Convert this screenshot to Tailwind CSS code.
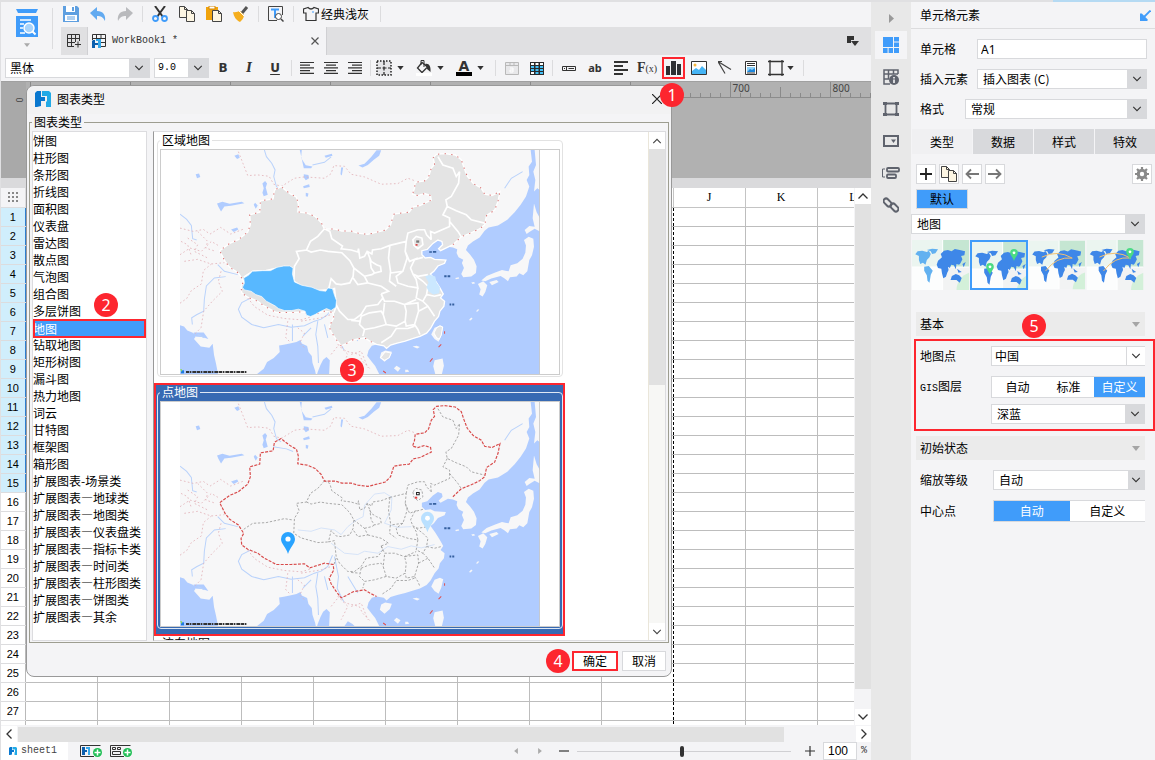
<!DOCTYPE html>
<html lang="zh-CN">
<head>
  <meta charset="UTF-8" />
  <title>WorkBook1</title>
  <script src="https://cdn.jsdelivr.net/npm/@tailwindcss/browser@4"></script>
</head>
<body class="h-screen overflow-hidden flex flex-col bg-[#f4f4f6] text-black text-xs font-['Noto_Sans_CJK_SC',sans-serif]">

  <!-- Shared drawings -->
  <svg class="hidden">
    <symbol id="chev" viewBox="0 0 12 8"><path d="M1.5 1.5 6 6l4.500-4.500" fill="none" stroke="currentColor" stroke-width="1.300" /></symbol>
    <symbol id="tri" viewBox="0 0 8 5"><path d="M0 0h8L4 5z" fill="currentColor" /></symbol>
    <symbol id="logo" viewBox="0 0 16 16">
      <path d="M0 2 2 0h4v6h4v4H6v5l-4 1H0z" fill="#0a78cf" />
      <path d="M7 0h7l2 2v14h-5V11l1-1V5H7z" fill="#22aae6" />
    </symbol>
    <symbol id="pin" viewBox="0 0 14 22"><path d="M7 22C5 15 0 12 0 7a7 7 0 0 1 14 0c0 5-5 8-7 15z" fill="currentColor" /><circle cx="7" cy="7" r="2.600" fill="#fff" /></symbol>
    <symbol id="copy" viewBox="0 0 16 16">
      <path d="M.5.5h5l3 3v8h-8z" fill="#fdf6e3" stroke="#444" /><path d="M5.500.500v3h3" fill="none" stroke="#444" />
      <path d="M7.500 4.500h5l3 3v8h-8z" fill="#fdf6e3" stroke="#444" /><path d="M12.500 4.500v3h3" fill="none" stroke="#444" />
    </symbol>

    <!-- Sea, neighbours, rivers -->
    <symbol id="base" viewBox="87 75 1079 674" preserveAspectRatio="none">
      <path d="M87 75h1079v674H87z" fill="#f7f7f8" />
      <path fill="#b0ccff" d="M1138 75L1142 110 1132 125 1134 150 1126 165 1134 185 1124 215 1108 240 1090 262 1068 285 1040 302 1012 308 1000 318 985 338 965 350 950 362 944 376 955 388 968 405 976 425 974 445 960 456 936 458 930 448 938 430 932 415 936 405 922 398 916 385 918 374 905 368 890 366 868 378 862 372 874 360 872 350 860 346 845 356 828 374 812 378 812 390 822 400 838 398 850 404 884 406 880 416 860 424 848 440 838 448 852 468 866 490 876 508 868 520 880 530 878 545 866 560 862 576 850 590 838 612 826 626 806 636 786 642 762 650 738 656 718 662 706 672 698 664 676 660 662 664 652 678 648 694 660 710 672 725 684 749H1166V75z" />
      <path fill="#b0ccff" d="M87 602L99 606 109 618 127 626 133 638 129 644 149 666 175 670 185 658 189 692 195 718 201 749H87zM318 749L338 733 348 713 368 701 386 683 384 663 398 661 416 657 436 653 448 647 452 657 468 665 472 683 482 695 484 715 492 739 494 749zM500 742L508 722 516 706 526 698 536 708 534 749H498zM580 749L590 735 604 743 610 749z" />
      <!-- Sakhalin, Hokkaido, Honshu, Kyushu, Taiwan, Luzon, Hainan -->
      <g fill="#f7f7f8">
        <path d="M1150 75H1166V196L1158 190 1148 200 1152 165 1146 140 1154 120zM1148 236L1156 262 1166 280V320L1150 312 1134 322 1126 328 1120 316 1134 304 1150 306 1144 280zM1132 336L1146 342 1148 366 1142 392 1134 406 1128 440 1116 452 1104 446 1096 456 1076 458 1070 470 1060 462 1048 454 1020 462 1002 470 990 468 1006 454 1030 444 1052 436 1062 438 1072 440 1078 422 1098 416 1114 402 1122 384 1124 362 1118 346z" />
        <path d="M980 478L996 470 1008 482 1002 502 994 516 984 510 988 494zM1014 472L1036 466 1042 472 1022 482zM866 604L876 608 870 634 862 652 850 644 840 630 850 610zM850 708L874 702 878 724 872 749H852L846 726zM702 678L722 682 716 698 700 712 686 700 690 684z" />
        <path d="M784 666l12-2 10 4-8 4zM728 732l8-8 12 8-8 10zM762 736h8l4 6-12 2zM954 585l6-6 4 4-8 6zM974 560l6-6 4 2-6 6zM960 474l8-2 4 4-8 2zM912 460l10-2 2 4-10 2z" />
      </g>
      <!-- lakes -->
      <g fill="#b0ccff">
        <path d="M622 122L640 116 660 96 676 76 690 76 684 92 668 104 650 120 634 128zM198 236L214 231 236 237 272 231 280 235 240 243 220 245 210 260 202 246zM240 314l18-6 4 6-14 8zM458 148l14 2 2 10-10 6-6-8zM446 75h6l-2 24 14 22 20 4-4 5H458zM134 148l10-2 4 10-10 4zM334 176l8-8 6 8-4 12 6 22-12 4-4-10 4-14zM570 128h6l-4 24-4-4zM456 184l18-6 2 8-18 4zM464 204l8 2-2 10-6-2zM250 92l12-4 4 10-8 4zM312 234l8 8-6 10-6-12zM520 92l22-6 2 6-20 6z" />
        <path d="M128 624h30l14 20-20-6-24-2z" />
      </g>
      <g fill="none" stroke="#b9d2fb" stroke-width="3">
        <path d="M87 268L107 284 121 302 125 342 137 346M340 75L346 95 362 115 372 135 368 155 376 185 390 195M366 210l40 6 20 8M124 600L122 580 138 570 158 560 160 524 166 484 190 460 224 456M300 520L272 534 262 554 272 578 302 600 338 610 382 600 420 608 460 604 490 590 510 584 530 570 544 536M424 600V650M1060 190L1080 160 1114 140M550 540L562 600 558 636 578 676M480 610L456 634M500 590L494 630 500 666 502 716M484 120L520 112 540 96" />
        <path d="M440 460L480 464 510 454 550 460 570 474 590 450 616 430 636 420 640 386 670 352 700 348 722 362 720 400 700 440 740 452 780 450M540 500L580 530 620 534 640 524 680 530 710 510 750 518 780 508 810 514 850 504" stroke-width="2" stroke="#c6daf8" />
        <path d="M200 420l20 20 40 10M160 640l-20-10M520 600l10 40M590 600l30 50" />
      </g>
      <g fill="none" stroke="#e2b2b8" stroke-width="2.500" stroke-dasharray="5 7">
        <path d="M262 80L276 116 290 152 320 150 354 154 368 178 392 184 430 160 460 156 520 160 540 146 548 122 580 124 600 148 640 156 690 178 740 176 770 160 792 168" />
        <path d="M87 310L127 320 157 314 177 328 209 308 239 328 280 312M87 390L117 370 151 380 181 350 201 362M100 410L140 404 180 418 220 414M87 536L107 522 121 498 151 478 157 438 181 418M110 340l30 20-10 20 40 20M140 320l30 30-6 20 30 10M290 520L310 546 350 572 400 582 450 586 476 578M410 590l-6 50 14 14M440 610l20 16-14 30 14 14M540 690L564 660 584 680 624 690 634 710 658 735M560 660l30 30-20 40M600 690l30-10 20 50M450 590l60-10 30-10M90 350l20 10 10 30M210 440L202 470 214 500 184 530 158 560 150 610 130 630" />
      </g>
      <path d="M834 380h8v4h-8zM845 379h10v5h-10zM879 452h7v6h-7zM889 452h8v6h-8zM895 537h5v6h-5zM903 537h6v6h-6z" fill="#345f9f" />
      <path d="M862 668l8-8M836 712l8-10M880 620v8M696 740l8 6" stroke="#e05050" stroke-width="3" />
      <path d="M90 738h9v9h-9z" fill="#1f7be0" /><path d="M87 735h6v8z" fill="#8fdc50" />
      <path d="M105 743h184" stroke="#333" stroke-width="6" stroke-dasharray="9 2 5 3 12 2" />
      <path d="M1165 75v674" stroke="#c8c8c8" stroke-width="3" />
    </symbol>

    <symbol id="outline" viewBox="87 75 1079 674" preserveAspectRatio="none">
      <path d="M390 185L402 195 418 207 436 217 442 239 440 261 468 265 492 275 510 293 520 313 552 313 572 319 600 319 620 325 650 329 674 323 702 316 718 300 728 268 754 264 774 262 786 246 806 242 840 226 838 212 820 206 800 212 784 208 790 190 792 172 820 168 832 156 840 130 850 118 846 98 856 88 880 86 912 90 930 104 938 128 948 154 966 176 990 190 1000 208 1022 212 1046 200 1040 230 1030 256 1006 272 1000 300 985 312 960 324 930 336 905 360 868 378 862 372 874 360 872 350 860 346 845 356 828 374 812 378 812 390 822 400 838 398 850 404 884 406 880 416 860 424 848 440 838 448 852 468 866 490 876 508 868 520 880 530 878 545 866 560 862 576 850 590 838 612 826 626 806 636 786 642 762 650 738 656 718 662 706 672 698 664 676 660 656 650 640 640 606 646 584 658 570 664 555 645 540 622 534 606 548 580 546 564 520 560 476 574 460 562 420 564 376 564 340 545 320 530 290 518 272 505 270 485 278 470 262 445 236 428 222 410 206 378 236 356 262 345 290 322 298 300 296 270 326 262 328 228 366 222 370 196z" />
    </symbol>
    <!-- Land border only, without the coast -->
    <symbol id="border" viewBox="87 75 1079 674" preserveAspectRatio="none">
      <path fill="none" d="M905 360L930 336 960 324 985 312 1000 300 1006 272 1030 256 1040 230 1046 200 1022 212 1000 208 990 190 966 176 948 154 938 128 930 104 912 90 880 86 856 88 846 98 850 118 840 130 832 156 820 168 792 172 790 190 784 208 800 212 820 206 838 212 840 226 806 242 786 246 774 262 754 264 728 268 718 300 702 316 674 323 650 329 620 325 600 319 572 319 552 313 520 313 510 293 492 275 468 265 440 261 442 239 436 217 418 207 402 195 390 185 370 196 366 222 328 228 326 262 296 270 298 300 290 322 262 345 236 356 206 378 222 410 236 428 262 445 278 470 270 485 272 505 290 518 320 530 340 545 376 564 420 564 460 562 476 574 520 560 546 564 548 580 534 606 540 622 555 645 570 664 584 658 606 646 640 640 656 650 676 660" />
    </symbol>
    <symbol id="inner" viewBox="87 75 1079 674" preserveAspectRatio="none">
      <path fill="none" d="M520 312L500 335 478 350 466 376 436 380 444 402 430 425 428 470 450 484 500 498 532 496M278 458L305 440 345 438 400 426 425 430M466 376L480 382 508 376 530 380 572 384 596 408 608 430 606 455 596 475 570 480 555 478 540 462 532 496M520 312L536 320 542 342 574 364 570 372 600 376 620 382 622 372 626 400 640 395 648 380 662 388 664 376 690 372 716 362M648 380L660 410 676 420 688 425 690 440 670 445 660 430 656 400M608 430L640 455 650 475 620 480 606 460M640 455L662 450 670 445M716 362L712 400 718 440 715 470 735 485M650 475L690 485 712 500 690 508M716 362L765 350 762 380 768 400 755 440 718 445M765 350L770 325 800 315 820 315 826 330 840 345M762 380L775 410 800 400M785 345L795 335 812 340 815 360 800 372 788 362zM815 398L790 405 778 430 785 448 800 455 830 450M755 440L735 455 740 475 770 485 800 490 795 465 785 448M795 455L815 470 830 485 826 510 850 515 870 510M800 490L795 520 815 530 826 510M690 508L700 530 730 530 760 540 795 525M700 535L696 570 705 600 735 605 762 590 765 560 760 540 800 535 802 560 790 600 765 605 762 590M802 560L830 545M790 600L800 615 806 630M815 530L830 545 850 575M790 605L770 612 735 612 720 635 690 655M705 600L670 610 640 615 635 635M630 575L655 565 690 560 696 570M630 575L625 600 640 615M532 496L550 492 555 540 565 560 590 585 610 585 630 570 645 545 680 540 695 520 690 508M555 545L548 565M600 588L625 590M860 95L875 120 905 130 915 155 925 140 922 175 900 215 884 225 888 245 915 258 945 270 960 285 1000 295M888 245L875 270 895 280 895 305 850 325 838 320 840 345M895 290L920 320 930 336" />
    </symbol>

    <!-- Small world map for the type switcher -->
    <symbol id="worldbg" viewBox="155 360 173 150" preserveAspectRatio="none">
      <path d="M155 360h93v81h-93z" fill="#ebf5f0" /><path d="M248 360h80v81h-80z" fill="#c5e6d2" />
      <path d="M155 441h93v69h-93z" fill="#fcfdfd" /><path d="M248 441h80v69h-80z" fill="#f2f3f3" />
      <path d="M328 458a56 56 0 0 0-38 52h38z" fill="#d3f0d9" /><path d="M248 360v150M155 441h173" stroke="#fff" stroke-width="3" />
    </symbol>
    <symbol id="americas" viewBox="155 360 173 150" preserveAspectRatio="none">
      <path fill="currentColor" d="M165 403L172 394 186 392 200 396 206 392 212 402 208 412 200 420 196 434 188 428 180 432 176 420 176 408zM200 390L216 386 234 388 226 400 216 402 212 394zM192 440L206 438 218 452 212 464 208 488 202 482 200 466 192 452z" />
    </symbol>
    <symbol id="eurasia" viewBox="155 360 173 150" preserveAspectRatio="none">
      <path fill="currentColor" d="M230 434L234 422 246 412 242 402 252 392 264 390 275 394 285 387 300 390 316 394 314 406 304 408 308 418 302 430 298 434 290 432 288 448 282 436 274 434 270 444 264 440 266 450 262 458 258 470 250 475 246 460 244 446 234 444zM272 480L276 468 288 462 298 466 306 474 300 488 290 480zM292 446L300 452 306 456 296 458zM308 432L318 426 312 442z" />
    </symbol>
  </svg>

  <!-- Window edge -->
  <div class="flex h-0.5 shrink-0">
    <div class="flex-1 bg-[#e0e0e2]"></div>
    <div class="w-[102px] bg-[#b5daf3]"></div>
  </div>

  <div class="flex flex-1 min-h-0">
    <!-- ===== Designer ===== -->
    <main class="flex-1 min-w-0 flex flex-col border-l border-[#e0e0e2]">
      <div class="flex shrink-0">
        <button aria-label="模板" class="w-[51px] flex flex-col items-center pt-[7px]">
          <svg class="w-[22px] h-7" viewBox="0 0 22 28">
            <path d="M0 0h22l-2 4H2zM0 7h22v21H0z" fill="#409cfa" />
            <path d="M4 11h11M4 15h4M4 19h3M4 24h5" stroke="#fff" stroke-width="1.500" /><circle cx="13" cy="19" r="5" fill="#a9d4fb" stroke="#fff" stroke-width="1.500" /><path d="m16.500 22.500 3 3" stroke="#fff" stroke-width="2" />
          </svg>
          <svg class="w-1.5 h-1 mt-1.5 text-[#aaa]"><use href="#tri" /></svg>
        </button>
        <div class="w-px my-1.5 bg-[#dcdcde]"></div>
        <div class="flex-1 min-w-0 pl-2">
          <!-- Main toolbar -->
          <div class="h-[25px] flex items-center gap-[11px] pl-0.5 pb-0.5">
            <button aria-label="保存"><svg class="size-4" viewBox="0 0 16 16"><path d="M0 0h14l2 2v14H0z" fill="#5e9fe0" /><path d="M3 0h9v6H3zM2 9h12v6H2z" fill="#fff" /><path d="M9 1h2v4H9z" fill="#5e9fe0" /><path d="M4 11h8M4 13h8" stroke="#5e9fe0" /></svg></button>
            <button aria-label="撤销"><svg class="size-4" viewBox="0 0 16 16"><path d="M0 7l7-6v4c6 0 9 4 8 10-2-4-4-5-8-5v4z" fill="#62aaf0" /></svg></button>
            <button aria-label="重做"><svg class="size-4" viewBox="0 0 16 16"><path d="M16 7 9 1v4C3 5 0 9 1 15c2-4 4-5 8-5v4z" fill="#b9babd" /></svg></button>
            <div class="w-px h-4 -mx-0.5 bg-[#dcdcde]"></div>
            <button aria-label="剪切"><svg class="size-4" viewBox="0 0 16 16"><path d="m3 0 8 11M13 0 5 11" stroke="#333" stroke-width="2" /><circle cx="3.500" cy="12.500" r="2.500" fill="none" stroke="#409cfa" stroke-width="1.800" /><circle cx="12.500" cy="12.500" r="2.500" fill="none" stroke="#409cfa" stroke-width="1.800" /></svg></button>
            <button aria-label="复制"><svg class="size-4"><use href="#copy" /></svg></button>
            <button aria-label="粘贴"><svg class="size-4" viewBox="0 0 16 16"><path d="M0 1h12v13H0z" fill="#f0a30c" /><path d="M3 0h6v3H3z" fill="#fff" stroke="#d48806" /><path d="M6.500 4.500h6l3 3v8h-9z" fill="#fdf6e3" stroke="#444" /><path d="M12.500 4.500v3h3" fill="none" stroke="#444" /></svg></button>
            <button aria-label="格式刷"><svg class="size-4" viewBox="0 0 16 16"><path d="m14 1-5 6" stroke="#555" stroke-width="3" /><path d="M0 6c3 1 5-1 7-1l4 4c0 3-2 5-4 7-4-2-6-5-7-10z" fill="#f5ae1e" /><path d="m6 5 5 5" stroke="#fff" stroke-width="1" /></svg></button>
            <div class="w-px h-4 -mx-0.5 bg-[#dcdcde]"></div>
            <button aria-label="查找"><svg class="size-4" viewBox="0 0 16 16"><path d="M9 14.500H.500V.500h14V9" fill="none" stroke="#444" /><path d="M3 3.500h8M7 4v8" stroke="#409cfa" stroke-width="2" /><circle cx="10.500" cy="10.500" r="3" fill="#fff" stroke="#444" /><path d="m13 13 2.500 2.500" stroke="#444" stroke-width="1.500" /></svg></button>
            <div class="w-px h-4 -mx-0.5 bg-[#dcdcde]"></div>
            <button class="flex items-center gap-0.5"><svg class="size-4" viewBox="0 0 16 16"><path d="M5 1.500.500 3v4H3v7.500h10V7h2.500V3L11 1.500Q8 4.500 5 1.500z" fill="none" stroke="#333" stroke-width="1.200" /><path d="M9 6h2" stroke="#409cfa" /></svg>经典浅灰</button>
            <div class="w-px h-4 bg-[#dcdcde]"></div>
          </div>
          <!-- Workbook tabs -->
          <div class="h-7 flex items-center bg-[#e0e0e2]">
            <button aria-label="新建" class="w-[26px] h-7 flex items-center justify-center"><svg class="size-3.5" viewBox="0 0 14 14"><path d="M7 12.500H.500V.500h12V7M.500 4.500h12M.500 8.500H8M4.500.500v12M8.500.500V8M8 10.500h6M11 7.500v6" fill="none" stroke="#333" /></svg></button>
            <div class="w-60 h-7 flex items-center bg-[#f4f4f6] border-x border-[#d0d0d3] pl-1 pr-[7px]">
              <svg class="size-3.5" viewBox="0 0 14 14"><path d="M.500 6V.500h13v12H9M.500 4.500h13M9 8.500h4.500M4.500.500v4M9 .500v4" fill="none" stroke="#333" /><path d="M0 7l1-1h2v8H0zM3 9h3v2H3z" fill="#0b5fae" /><path d="M4 5h5v9H6V7H4z" fill="#35a8ea" /></svg>
              <span class="ml-1.5 flex-1 text-[10px] font-['Liberation_Mono',monospace] text-[#333]">WorkBook1 *</span>
              <button aria-label="关闭"><svg class="size-2" viewBox="0 0 8 8"><path d="m.500.500 7 7m0-7-7 7" stroke="#555" stroke-width="1.200" /></svg></button>
            </div>
            <button aria-label="窗口" class="ml-auto mr-3"><svg class="w-3 h-2.5" viewBox="0 0 12 10"><path d="M0 0h7v4H4v3H0z" fill="#333" /><path d="M4 5h8L8 10z" fill="#333" /></svg></button>
          </div>
        </div>
      </div>

      <!-- Format toolbar -->
      <div class="h-[26px] shrink-0 flex items-center pl-1 text-[#333]">
        <div class="relative w-[145px] h-5 flex bg-white border border-[#d8d9dc]">
          <select aria-label="字体" class="appearance-none w-full pl-1 outline-none text-black"><option>黑体</option></select>
          <span class="absolute right-0 w-5 h-full bg-[#d8d9dc] flex items-center justify-center pointer-events-none"><svg class="w-2.5 h-2"><use href="#chev" /></svg></span>
        </div>
        <div class="relative w-[55px] h-5 flex bg-white border border-[#d8d9dc] ml-1">
          <select aria-label="字号" class="appearance-none w-full pl-[3px] outline-none text-[10px] text-black font-['Liberation_Mono',monospace]"><option>9.0</option></select>
          <span class="absolute right-0 w-5 h-full bg-[#d8d9dc] flex items-center justify-center pointer-events-none"><svg class="w-2.5 h-2"><use href="#chev" /></svg></span>
        </div>
        <button class="w-[26px] ml-px font-['DejaVu_Sans',sans-serif] font-bold">B</button>
        <button class="w-[26px] font-['DejaVu_Serif',serif] font-bold italic">I</button>
        <button class="w-[26px] font-['DejaVu_Sans',sans-serif] font-bold underline underline-offset-2">U</button>
        <div class="w-px h-4 mx-[3px] bg-[#dcdcde]"></div>
        <button aria-label="左对齐" class="w-6 flex justify-center"><svg class="w-3.5 h-3" viewBox="0 0 14 12"><path d="M0 .500h14M0 3.200h10M0 5.900h14M0 8.600h10M0 11.300h14" stroke="#333" stroke-width="1.200" /></svg></button>
        <button aria-label="居中" class="w-6 flex justify-center"><svg class="w-3.5 h-3" viewBox="0 0 14 12"><path d="M0 .500h14M2 3.200h10M0 5.900h14M2 8.600h10M0 11.300h14" stroke="#333" stroke-width="1.200" /></svg></button>
        <button aria-label="右对齐" class="w-6 flex justify-center"><svg class="w-3.5 h-3" viewBox="0 0 14 12"><path d="M0 .500h14M4 3.200h10M0 5.900h14M4 8.600h10M0 11.300h14" stroke="#333" stroke-width="1.200" /></svg></button>
        <div class="w-px h-4 mx-[3px] bg-[#dcdcde]"></div>
        <button aria-label="边框" class="w-10 flex items-center gap-[5px] pl-0.5"><svg class="size-4" viewBox="0 0 16 16"><path d="M1 1h14v14H1z" fill="#e6e6e8" stroke="#222" stroke-width="1.500" stroke-dasharray="1.500 1.500" /><path d="M1 8h14M8 1v14" stroke="#222" stroke-width="1.200" stroke-dasharray="4 1.500" /></svg><svg class="w-[7px] h-1"><use href="#tri" /></svg></button>
        <button aria-label="填充" class="w-10 flex items-center gap-[5px] pl-0.5"><svg class="size-4" viewBox="0 0 16 16"><path d="M6 2.500 1.500 8 6 12.500 11.500 7z" fill="#f4f4f6" stroke="#333" stroke-width="1.300" /><path d="M5 5V.500h3V7" fill="none" stroke="#333" /><path d="M9 4c4-1 6 2 5.500 8L11 9V7z" fill="#333" /><path d="M0 13h16v3H0z" fill="#fff" /></svg><svg class="w-[7px] h-1"><use href="#tri" /></svg></button>
        <button aria-label="文字颜色" class="w-[38px] flex items-center gap-[5px] pl-0.5"><span class="w-4 h-4 border-b-4 border-black text-center leading-3 text-sm font-bold font-['DejaVu_Sans',sans-serif]">A</span><svg class="w-[7px] h-1"><use href="#tri" /></svg></button>
        <div class="w-px h-4 mx-[3px] bg-[#dcdcde]"></div>
        <button aria-label="合并" class="w-[25px] flex justify-center"><svg class="w-3.5 h-[13px]" viewBox="0 0 14 13"><path d="M.500.500h13v12H.500zM.500 3.500h13M5 .500v3M9 .500v3" fill="#e8e8ea" stroke="#b9b9b9" /><path d="M5 6h3v4H5V8h3" fill="none" stroke="#fff" /></svg></button>
        <button aria-label="表格" class="w-[25px] flex justify-center"><svg class="w-3.5 h-[13px]" viewBox="0 0 14 13"><path d="M0 0h14v13H0z" fill="#2a2a2a" /><path d="M1 1h3v2H1zM5.500 1h3v2h-3zM10 1h3v2h-3z" fill="#fff" /><path d="M1 4h3v2H1zM5.500 4h3v2h-3zM10 4h3v2h-3zM1 7h3v2H1zM5.500 7h3v2h-3zM10 7h3v2h-3zM5.500 10h3v2h-3zM10 10h3v2h-3z" fill="#45c0f5" /><path d="M1 10h3v2H1z" fill="#fff" /></svg></button>
        <div class="w-px h-4 mx-[3px] bg-[#dcdcde]"></div>
        <button aria-label="控件" class="w-[26px] flex justify-center"><svg class="w-3.5 h-[5px]" viewBox="0 0 14 5"><path d="M.500.500h13v4H.500zM4.500.500v4M6.500 2.500H12M2 2.500h1" fill="none" stroke="#333" /></svg></button>
        <button class="w-[26px] text-[11px] font-bold font-['Noto_Sans',sans-serif]">ab</button>
        <button aria-label="富文本" class="w-[26px] flex justify-center"><svg class="w-3.5 h-3.5" viewBox="0 0 14 14"><path d="M0 1h14M0 5h9M0 9h14M0 13h9" stroke="#333" stroke-width="2" /></svg></button>
        <button class="w-[26px] text-sm leading-4 font-['Liberation_Serif',serif]"><span class="font-bold">F</span><span class="text-[10px]">(x)</span></button>
        <div class="relative w-[26px] flex justify-center">
          <button aria-label="插入图表" class="w-[23px] h-[22px] border-2 border-[#fd262f] flex items-center justify-center"><svg class="w-[15px] h-3.5" viewBox="0 0 15 14"><path d="M0 5h4v9H0zM5 0h5v14H5zM11 3h4v11h-4z" fill="#2e3033" /></svg></button>
          <span class="absolute z-20 left-0 top-[26px] size-6 rounded-full bg-[#fd262f] text-white text-base leading-6 text-center font-['Noto_Sans',sans-serif]">1</span>
        </div>
        <button aria-label="图片" class="w-[26px] flex justify-center"><svg class="w-4 h-3.5" viewBox="0 0 16 14"><path d="M.500.500h15v13H.500z" fill="#fff" stroke="#333" /><circle cx="4" cy="4" r="1.500" fill="#f5b63d" /><path d="m1 13V10l4-3 3 2 3-4 4 4v4z" fill="#45b4f5" /></svg></button>
        <button aria-label="斜线" class="w-[26px] flex justify-center"><svg class="w-3.5 h-3.5" viewBox="0 0 14 14"><path d="m0 .500 13 8M0 .500l7 12M0 .500h4" fill="none" stroke="#444" stroke-width="1.200" /></svg></button>
        <button aria-label="子报表" class="w-[26px] flex justify-center"><svg class="w-3 h-3.5" viewBox="0 0 12 14"><path d="M.500.500h11v13H.500z" fill="#fff" stroke="#333" /><path d="M2 2.500h8M2 4.500h8M2 12h8" stroke="#333" /><path d="M2 6h8v5H2z" fill="#8fd0f8" /><path d="m2 11 3-3 2 1 3-2v4z" fill="#1c86dc" /></svg></button>
        <button aria-label="悬浮元素" class="w-9 flex items-center gap-[3px] pl-1"><svg class="size-4" viewBox="0 0 16 16"><path d="M2 0v16M14 0v16M0 1.500h16M0 14.500h16" stroke="#333" stroke-width="1.300" /></svg><svg class="w-[7px] h-1"><use href="#tri" /></svg></button>
        <div class="w-px h-4 ml-[3px] bg-[#dcdcde]"></div>
      </div>

      <!-- Sheet -->
      <div class="relative flex-1 min-h-0">
        <div class="h-full flex flex-col overflow-hidden">
          <div class="h-[97px] shrink-0 bg-[#b1b1b1] flex border-t border-[#a0a0a0]">
            <div class="w-[25px] bg-[#a9a9a9] pt-3"><span class="block rotate-90 w-3 ml-3 text-center text-[9px] leading-3 text-[#444]">0</span></div>
            <svg class="flex-1 h-4 border-b border-[#8c8c8c]" id="ruler"></svg>
          </div>
          <div class="h-2.5 shrink-0 bg-[#dadadc]"></div>
          <div class="flex flex-1 min-h-0">
            <div class="flex-1 min-w-0 overflow-hidden bg-white">
              <table class="table-fixed border-collapse w-[888px] text-[11px] leading-4 font-['Liberation_Sans',sans-serif]" id="grid"></table>
            </div>
            <div class="w-4 ml-px flex flex-col bg-[#f4f4f6]">
              <button aria-label="上" class="h-4 bg-white flex items-center justify-center"><svg class="w-3 h-2 rotate-180 text-[#333]"><use href="#chev" /></svg></button>
              <div class="h-[485px] bg-[#e1e1e1]"></div>
              <button aria-label="下" class="mt-auto h-4 bg-white flex items-center justify-center"><svg class="w-3 h-2 text-[#333]"><use href="#chev" /></svg></button>
            </div>
          </div>
        </div>

        <!-- ===== Chart type dialog ===== -->
        <div role="dialog" aria-labelledby="dlgTitle" class="absolute z-10 left-[25px] top-1 w-[646px] h-[592px] flex flex-col bg-[#f4f4f6] border border-[#999] rounded-lg">
          <div class="h-[28px] shrink-0 flex items-center pl-2 pr-[9px] pb-0.5 rounded-t-lg bg-[#f2f2f3]">
            <svg class="size-4"><use href="#logo" /></svg>
            <h2 id="dlgTitle" class="ml-1.5 flex-1">图表类型</h2>
            <button aria-label="关闭"><svg class="size-2.5" viewBox="0 0 10 10"><path d="m0 0 10 10M10 0 0 10" stroke="#222" stroke-width="1.200" /></svg></button>
          </div>
          <fieldset class="flex-1 min-h-0 mx-0.5 px-0.5 pt-px pb-px border border-[#9d9d90] flex gap-1.5">
            <legend class="px-0.5 leading-4">图表类型</legend>
            <div class="relative w-[115px] h-full shrink-0">
              <ul class="h-full bg-white border border-[#dcdcdf]" id="types"></ul>
              <span class="absolute left-[62px] top-[162px] size-6 rounded-full bg-[#fd262f] text-white text-base leading-6 text-center font-['Noto_Sans',sans-serif]">2</span>
            </div>
            <div class="relative flex-1 h-full min-w-0 flex bg-white border border-[#dcdcdf] border-l-[#999]">
              <div class="flex-1 min-w-0 h-full overflow-hidden">
                <fieldset class="w-[406px] ml-[3px] mt-px px-0.5 pt-0.5 pb-px border border-[#e2e2e2] rounded">
                  <legend class="px-0.5 h-3.5 leading-[14px]">区域地图</legend>
                  <div class="h-[226px] border border-[#ccc] flex justify-center">
                    <svg class="w-[360px] h-[224px]" viewBox="0 0 360 224">
                      <use href="#base" width="360" height="224" />
                      <use href="#outline" width="360" height="224" fill="#e4e4e4" stroke="#fff" stroke-width="4" />
                      <use href="#border" width="360" height="224" stroke="#d87070" stroke-width="3" stroke-dasharray="4 16" />
                      <use href="#inner" width="360" height="224" stroke="#fff" stroke-width="5" />
                      <svg width="360" height="224" viewBox="87 75 1079 674" preserveAspectRatio="none">
                        <path d="M278 460L292 452 304 440 334 438 358 438 378 428 398 424 416 424 426 430 424 448 430 472 452 482 482 488 506 498 524 500 530 490 544 492 550 512 556 528 554 548 540 558 526 552 506 562 492 570 478 576 466 572 462 560 442 554 422 558 400 558 382 552 372 544 346 530 332 516 314 510 300 500 280 496 274 488 280 476z" fill="#58b8ff" stroke="#fff" stroke-width="2" />
                        <path d="M822 456L836 450 852 456 856 474 866 488 864 506 846 510 832 500 826 488 832 474z" fill="#cbe8ff" />
                        <path d="M866 604l8 4-4 24-6 12-8-4-8-14 8-16zM702 682l18 4-6 14-14 8-12-8z" fill="#e4e4e4" stroke="#fff" stroke-width="3" />
                        <path d="M795 347h9v7h-9z" fill="#777" /><path d="M793 358h6v5h-6z" fill="#e04040" />
                      </svg>
                    </svg>
                  </div>
                </fieldset>
                <div class="w-[411px] mt-1.5 pl-px pb-[5px] border-2 border-[#fd262f] bg-[#376ab3]">
                  <fieldset class="px-0.5 pt-0.5 pb-px border border-[#dfe8f5] rounded">
                    <legend class="px-0.5 h-3.5 leading-[14px] text-white">点地图</legend>
                    <div class="h-[226px] bg-white border border-[#ccc] flex justify-center">
                      <svg class="w-[360px] h-[224px]" viewBox="0 0 360 224">
                        <use href="#base" width="360" height="224" />
                        <use href="#inner" width="360" height="224" stroke="#999" stroke-width="2.500" stroke-dasharray="7 5" />
                        <use href="#border" width="360" height="224" stroke="#d84a4a" stroke-width="3.500" stroke-dasharray="9 4" />
                        <svg width="360" height="224" viewBox="87 75 1079 674" preserveAspectRatio="none">
                          <path d="M796 347h8v7h-8z" fill="#fff" stroke="#222" stroke-width="3" /><path d="M791 360h7v6h-7z" fill="#e84040" />
                        </svg>
                        <use href="#pin" x="101" y="130" width="14" height="22" class="text-[#29a3ff]" />
                        <use href="#pin" x="241" y="109" width="13" height="22" class="text-[#b9e0ff]" />
                      </svg>
                    </div>
                  </fieldset>
                </div>
                <p class="ml-2 leading-[14px]">流向地图</p>
              </div>
              <div class="w-[17px] shrink-0 flex flex-col bg-[#f7f7f5] border-l border-[#eae6da]">
                <button aria-label="上" class="h-[17px] bg-white flex items-center justify-center"><svg class="w-2.5 h-2 rotate-180 text-[#444]"><use href="#chev" stroke-width="2" /></svg></button>
                <div class="h-[236px] bg-[#e1e1e1]"></div>
                <button aria-label="下" class="mt-auto h-[17px] bg-white flex items-center justify-center"><svg class="w-2.5 h-2 text-[#444]"><use href="#chev" /></svg></button>
              </div>
              <span class="absolute left-[186px] top-[226px] size-6 rounded-full bg-[#fd262f] text-white text-base leading-6 text-center font-['Noto_Sans',sans-serif]">3</span>
            </div>
          </fieldset>
          <div class="h-[33px] shrink-0 flex items-center justify-end gap-1 pr-[5px] pb-px pt-1">
            <div class="relative">
              <button class="block w-[46px] h-5 leading-4 bg-white border-2 border-[#fd262f]">确定</button>
              <span class="absolute right-[48px] -top-0.5 size-6 rounded-full bg-[#fd262f] text-white text-base leading-6 text-center font-['Noto_Sans',sans-serif]">4</span>
            </div>
            <button class="w-11 h-5 leading-4 bg-white border border-[#d8d9dc]">取消</button>
          </div>
        </div>
      </div>

      <!-- Horizontal scrollbar -->
      <div class="h-4 shrink-0 flex items-center mt-px">
        <button aria-label="左" class="w-4 h-4 bg-white flex items-center justify-center"><svg class="w-3 h-2 rotate-90 text-[#333]"><use href="#chev" /></svg></button>
        <div class="w-[766px] h-[15px] ml-px bg-[#e1e1e1]"></div>
        <button aria-label="右" class="ml-auto w-[15px] h-4 bg-white flex items-center justify-center"><svg class="w-3 h-2 -rotate-90 text-[#333]"><use href="#chev" /></svg></button>
      </div>
      <!-- Status bar -->
      <div class="h-[18px] shrink-0 flex items-center">
        <button class="w-[67px] h-full bg-white flex items-center gap-1 pl-2 text-[10px] text-[#444] font-['Liberation_Mono',monospace]"><svg class="size-2"><use href="#logo" /></svg>sheet1</button>
        <button aria-label="添加sheet" class="ml-3"><svg class="w-[22px] h-3" viewBox="0 0 22 12"><path d="M14 11.500H.500V.500h20" fill="none" stroke="#333" /><path d="M2 2h3v3h2v2H5v3H2z" fill="#0b5fae" /><path d="M6 2h4v8H8V4H6z" fill="#35a8ea" /><circle cx="17.500" cy="7.500" r="4.500" fill="#1fbf55" /><path d="M14.500 7.500h6M17.500 4.500v6" stroke="#fff" stroke-width="1.500" /></svg></button>
        <button aria-label="添加决策报表" class="ml-2"><svg class="w-[22px] h-3" viewBox="0 0 22 12"><path d="M14 11.500H.500V.500h20" fill="none" stroke="#333" /><path d="M2.500 2.500h3v2h-3zM7.500 2.500h3v2h-3zM2.500 6.500h8v3h-8z" fill="none" stroke="#333" /><circle cx="17.500" cy="7.500" r="4.500" fill="#1fbf55" /><path d="M14.500 7.500h6M17.500 4.500v6" stroke="#fff" stroke-width="1.500" /></svg></button>
        <div class="ml-auto flex items-center text-[#333]">
          <svg class="w-1.5 h-1 rotate-90 text-[#aaa]"><use href="#tri" /></svg>
          <svg class="w-1.5 h-1 -rotate-90 ml-[18px] text-[#aaa]"><use href="#tri" /></svg>
          <button aria-label="缩小" class="ml-4"><svg class="size-2.5" viewBox="0 0 10 10"><path d="M0 5h10" stroke="#333" stroke-width="1.200" /></svg></button>
          <input type="range" aria-label="缩放" value="49" class="appearance-none w-[214px] h-px mx-2 bg-[#d0d0d3] [&::-webkit-slider-thumb]:appearance-none [&::-webkit-slider-thumb]:w-1 [&::-webkit-slider-thumb]:h-[11px] [&::-webkit-slider-thumb]:rounded-sm [&::-webkit-slider-thumb]:bg-[#333]" />
          <button aria-label="放大" class="ml-1.5"><svg class="size-2.5" viewBox="0 0 10 10"><path d="M0 5h10M5 0v10" stroke="#333" stroke-width="1.200" /></svg></button>
          <input aria-label="缩放比例" value="100" class="w-[34px] h-[18px] ml-2 pl-1 bg-white border border-[#d8d9dc] text-black font-['Liberation_Sans',sans-serif]" />
          <span class="w-[14px] text-center text-[10px] font-['Liberation_Mono',monospace]">%</span>
        </div>
      </div>
    </main>

    <!-- ===== Side icons ===== -->
    <nav class="w-10 shrink-0 flex flex-col items-center gap-1 bg-[#e8e8e8] text-[#5f636d]">
      <button aria-label="折叠" class="h-[25px] pt-2"><svg class="w-[5px] h-[9px]" viewBox="0 0 5 9"><path d="M0 0v9l5-4.500z" fill="#999" /></svg></button>
      <button aria-label="单元格元素" class="w-8 h-7 flex items-center justify-center bg-[#f4f4f6]"><svg class="size-4" viewBox="0 0 16 16" fill="#409cfa"><path d="M0 0h10v10H0zM11 0h5v4.500h-5zM11 5.500h5V10h-5zM0 11h4.600v5H0zM5.600 11H10v5H5.600zM11 11h5v5h-5z" /></svg></button>
      <button aria-label="单元格属性" class="w-8 h-7 flex items-center justify-center"><svg class="size-4" viewBox="0 0 16 16"><path d="M7 15H1V1h14v4M1 5h14M1 10h5M5.500 1v9M10.500 1v4" fill="none" stroke="currentColor" stroke-width="1.500" /><circle cx="11" cy="11" r="5" fill="currentColor" /><path d="M11 8v1.500M11 10.500v3.500" stroke="#fff" stroke-width="1.500" /></svg></button>
      <button aria-label="悬浮元素" class="w-8 h-7 flex items-center justify-center"><svg class="size-4" viewBox="0 0 16 16"><path d="M2.500 2.500h11v11h-11z" fill="none" stroke="currentColor" stroke-width="1.800" /><path d="M0 1h4v3H0zM12 1h4v3h-4zM0 12h4v3H0zM12 12h4v3h-4z" fill="currentColor" /></svg></button>
      <button aria-label="控件设置" class="w-8 h-7 flex items-center justify-center"><svg class="size-4" viewBox="0 0 16 16"><path d="M1 3h14v10H1z" fill="none" stroke="currentColor" stroke-width="2" /><path d="M8 6.500h5L10.500 10z" fill="currentColor" /></svg></button>
      <button aria-label="条件属性" class="w-8 h-7 flex items-center justify-center"><svg class="w-[18px] h-3" viewBox="0 0 18 12"><path d="M3 2H.500v8H3" fill="none" stroke="currentColor" /><rect x="5" y="1" width="12" height="3.500" rx="1" fill="none" stroke="currentColor" stroke-width="1.800" /><rect x="5" y="7.500" width="9" height="3.500" rx="1" fill="none" stroke="currentColor" stroke-width="1.800" /></svg></button>
      <button aria-label="超级链接" class="w-8 h-7 flex items-center justify-center"><svg class="size-4" viewBox="0 0 16 16" fill="none" stroke="currentColor" stroke-width="2"><rect x="0" y="3" width="9" height="5" rx="2.500" transform="rotate(45 4.500 5.500)" /><rect x="7" y="8" width="9" height="5" rx="2.500" transform="rotate(45 11.500 10.500)" /></svg></button>
    </nav>

    <!-- ===== Property panel ===== -->
    <aside class="w-[244px] shrink-0">
      <div class="h-[27px] flex items-center justify-between pl-[9px] pr-1 border-b border-[#dcdcde]">
        <h2>单元格元素</h2>
        <button aria-label="弹出"><svg class="size-[11px]" viewBox="0 0 11 11"><path d="M10.500.500 3 8" stroke="#409cfa" stroke-width="1.800" /><path d="M0 3.500h1.800L7.500 9.200V11H0z" fill="#409cfa" /></svg></button>
      </div>

      <div class="flex flex-col gap-2.5 pt-2.5 pl-[9px] pr-2">
        <div class="h-5 flex items-center justify-between">
          <label for="cell">单元格</label>
          <input id="cell" value="A1" class="w-[170px] h-5 px-[3px] bg-white border border-[#d8d9dc] font-['Noto_Sans',sans-serif]" />
        </div>
        <div class="h-5 flex items-center justify-between">
          <label for="insert">插入元素</label>
          <div class="relative w-[170px] h-5 flex bg-white border border-[#d8d9dc]">
            <select id="insert" class="appearance-none w-full pl-[5px] outline-none"><option>插入图表 (C)</option></select>
            <span class="absolute right-0 w-[19px] h-full bg-[#d8d9dc] flex items-center justify-center pointer-events-none"><svg class="w-2.5 h-2 text-[#333]"><use href="#chev" /></svg></span>
          </div>
        </div>
        <div class="h-5 flex items-center justify-between">
          <label for="format">格式</label>
          <div class="relative w-[182px] h-5 flex bg-white border border-[#d8d9dc]">
            <select id="format" class="appearance-none w-full pl-[5px] outline-none"><option>常规</option></select>
            <span class="absolute right-0 w-[19px] h-full bg-[#d8d9dc] flex items-center justify-center pointer-events-none"><svg class="w-2.5 h-2 text-[#333]"><use href="#chev" /></svg></span>
          </div>
        </div>
      </div>

      <div class="mt-2.5 h-[25px] pl-px grid grid-cols-4 gap-px">
        <button class="bg-[#f0f0f2]">类型</button>
        <button class="bg-[#d8d9dc]">数据</button>
        <button class="bg-[#d8d9dc]">样式</button>
        <button class="bg-[#d8d9dc]">特效</button>
      </div>

      <div class="mt-2.5 flex gap-[3px] pl-[5px] pr-[3px]">
        <button aria-label="添加" class="size-5 bg-white border border-[#d8d9dc] flex items-center justify-center"><svg class="size-3" viewBox="0 0 12 12"><path d="M0 6h12M6 0v12" stroke="#222" stroke-width="1.800" /></svg></button>
        <button aria-label="复制" class="size-5 bg-white border border-[#d8d9dc] flex items-center justify-center"><svg class="size-4"><use href="#copy" /></svg></button>
        <button aria-label="前移" class="size-5 bg-white border border-[#d8d9dc] flex items-center justify-center"><svg class="size-3.5" viewBox="0 0 14 14"><path d="M14 7H2M6 2.500 1.500 7 6 11.500" fill="none" stroke="#777" stroke-width="1.800" /></svg></button>
        <button aria-label="后移" class="size-5 bg-white border border-[#d8d9dc] flex items-center justify-center"><svg class="size-3.5" viewBox="0 0 14 14"><path d="M0 7h12M8 2.500 12.500 7 8 11.500" fill="none" stroke="#777" stroke-width="1.800" /></svg></button>
        <button aria-label="设置" class="size-5 ml-auto bg-white border border-[#d8d9dc] flex items-center justify-center"><svg class="size-3.5" viewBox="0 0 14 14"><circle cx="7" cy="7" r="3.800" fill="none" stroke="#8a8a8a" stroke-width="3" /><path d="M7 0v14M0 7h14M2 2l10 10M12 2 2 12" stroke="#8a8a8a" stroke-width="2.200" /><circle cx="7" cy="7" r="2.200" fill="#fff" /></svg></button>
      </div>
      <button class="block mt-[5px] ml-[5px] w-[52px] h-5 leading-4 bg-[#409cfa] border border-[#d8d9dc]">默认</button>

      <div class="relative mt-[5px] w-[234px] h-5 flex bg-white border border-[#d8d9dc]">
        <select aria-label="图表" class="appearance-none w-full pl-[5px] outline-none"><option>地图</option></select>
        <span class="absolute right-0 w-[19px] h-full bg-[#d8d9dc] flex items-center justify-center pointer-events-none"><svg class="w-2.5 h-2 text-[#333]"><use href="#chev" /></svg></span>
      </div>

      <div class="mt-1.5 pl-px flex gap-px">
        <button aria-label="区域地图"><svg class="w-[57px] h-[50px]" viewBox="0 0 57 50"><use href="#worldbg" width="57" height="50" /><use href="#americas" width="57" height="50" class="text-[#62b1f0]" /><use href="#eurasia" width="57" height="50" class="text-[#3e87e8]" /></svg></button>
        <button aria-label="点地图" class="border-2 border-[#409cfa]"><svg class="w-[54px] h-[46px]" viewBox="0 0 54 46"><use href="#worldbg" width="57" height="50" /><use href="#americas" width="57" height="50" class="text-[#3e87e8]" /><use href="#eurasia" width="57" height="50" class="text-[#3e87e8]" /><use href="#pin" x="14" y="21" width="8" height="12" class="text-[#4bdb84]" /><use href="#pin" x="38" y="7" width="8" height="12" class="text-[#4bdb84]" /></svg></button>
        <button aria-label="流向地图"><svg class="w-[56px] h-[50px]" viewBox="0 0 57 50"><use href="#worldbg" width="57" height="50" /><use href="#americas" width="57" height="50" class="text-[#3e87e8]" /><use href="#eurasia" width="57" height="50" class="text-[#3e87e8]" /><path d="M13 17q16-8 31 1-16-2-27 13" fill="none" stroke="#f3c06f" /></svg></button>
        <button aria-label="自定义组合地图"><svg class="w-[58px] h-[50px]" viewBox="0 0 57 50"><use href="#worldbg" width="57" height="50" /><use href="#americas" width="57" height="50" class="text-[#3e87e8]" /><use href="#eurasia" width="57" height="50" class="text-[#3e87e8]" /><path d="M13 17q16-8 31 1-16-2-27 13" fill="none" stroke="#f3c06f" /><use href="#pin" x="39" y="8" width="9" height="12" class="text-[#4bdb84]" /></svg></button>
      </div>

      <div class="relative mt-[22px] ml-[5px] mr-2.5">
        <button class="w-full h-6 px-1 pr-[5px] flex items-center justify-between bg-[#ebebeb]">基本<svg class="w-2 h-[5px] text-[#a5a5a5]"><use href="#tri" /></svg></button>
        <span class="absolute left-[106px] top-[2px] size-6 rounded-full bg-[#fd262f] text-white text-base leading-6 text-center font-['Noto_Sans',sans-serif]">5</span>
      </div>
      <div class="mt-[3px] ml-[3px] h-[92px] pt-[5px] pl-1 pr-2 border-2 border-[#fd262f]">
        <div class="h-5 flex items-center justify-between">
          <label for="mapArea">地图点</label>
          <div class="relative w-[154px] h-5 flex bg-white border border-[#d8d9dc] border-r-0">
            <select id="mapArea" class="appearance-none w-full pl-[3px] outline-none"><option>中国</option></select>
            <span class="absolute right-0 w-[19px] h-full bg-white border-l border-[#d8d9dc] flex items-center justify-center pointer-events-none"><svg class="w-2.5 h-2 text-[#333]"><use href="#chev" /></svg></span>
          </div>
        </div>
        <div class="mt-2.5 h-[22px] flex items-center justify-between">
          <span><span class="text-[10px] font-['Liberation_Mono',monospace]">GIS</span>图层</span>
          <div class="w-[154px] h-[22px] grid grid-cols-3 bg-white border border-r-0 border-[#d8d9dc]">
            <button>自动</button>
            <button>标准</button>
            <button class="bg-[#409cfa] text-white">自定义</button>
          </div>
        </div>
        <div class="relative mt-1.5 ml-auto w-[154px] h-5 flex bg-white border border-[#d8d9dc]">
          <select aria-label="图层" class="appearance-none w-full pl-[5px] outline-none"><option>深蓝</option></select>
          <span class="absolute right-0 w-[19px] h-full bg-[#d8d9dc] flex items-center justify-center pointer-events-none"><svg class="w-2.5 h-2 text-[#333]"><use href="#chev" /></svg></span>
        </div>
      </div>

      <div class="mt-[5px] ml-[5px] mr-2.5">
        <button class="w-full h-6 px-1 pr-[5px] flex items-center justify-between bg-[#ebebeb]">初始状态<svg class="w-2 h-[5px] text-[#a5a5a5]"><use href="#tri" /></svg></button>
        <div class="mt-2.5 h-5 pl-1 flex items-center justify-between">
          <label for="zoomLevel">缩放等级</label>
          <div class="relative w-[152px] h-5 flex bg-white border border-[#d8d9dc]">
            <select id="zoomLevel" class="appearance-none w-full pl-[5px] outline-none"><option>自动</option></select>
            <span class="absolute right-0 w-4 h-full bg-[#d8d9dc] flex items-center justify-center pointer-events-none"><svg class="w-2.5 h-2 text-[#333]"><use href="#chev" /></svg></span>
          </div>
        </div>
        <div class="mt-2.5 h-[22px] pl-1 flex items-center justify-between">
          <span>中心点</span>
          <div class="w-[152px] h-[22px] grid grid-cols-2 bg-white border border-r-0 border-[#d8d9dc]">
            <button class="bg-[#409cfa] text-white">自动</button>
            <button>自定义</button>
          </div>
        </div>
      </div>
    </aside>
  </div>

  <script>
    // Chart type list
    const types = ['饼图', '柱形图', '条形图', '折线图', '面积图', '仪表盘', '雷达图', '散点图', '气泡图', '组合图',
      '多层饼图', '地图', '钻取地图', '矩形树图', '漏斗图', '热力地图', '词云', '甘特图', '框架图', '箱形图',
      '扩展图表-场景类', '扩展图表—地球类', '扩展图表—地图类', '扩展图表—仪表盘类', '扩展图表—指标卡类',
      '扩展图表—时间类', '扩展图表—柱形图类', '扩展图表—饼图类', '扩展图表—其余'];
    document.getElementById('types').innerHTML = types.map(t => t === '地图'
      ? '<li><button class="block relative w-full h-[19px] -mb-0.5 text-left leading-[15px] bg-[#409cfa] text-white outline-2 -outline-offset-2 outline-[#fd262f]">' + t + '</button></li>'
      : '<li><button class="block w-full h-[17px] text-left leading-[17px] whitespace-nowrap">' + t + '</button></li>').join('');

    // Spreadsheet grid, the page break runs along column I
    const cols = ['', '', '', '', '', '', '', '', '', 'J', 'K', 'L'];
    let html = '<thead><tr class="h-[19px]"><th class="w-[24px] p-0 bg-[#f4f4f6] border-b border-r border-[#dcdcde]"><svg class="size-2.5 mx-auto" viewBox="0 0 10 10"><path d="M0 1h10M0 5h10M0 9h10" stroke="#888" stroke-width="2" stroke-dasharray="2 2" /></svg></th>' +
      cols.map(c => '<th class="w-[72px] p-0 font-normal font-[\'Liberation_Serif\',serif] text-xs border-b border-r border-[#c4c4c4]">' + c + '</th>').join('') + '</tr></thead><tbody>';
    for (let r = 1; r <= 28; r++) {
      html += '<tr class="h-[19px]">' +
        (r <= 15 ? '<th class="p-0 font-normal bg-[#d0eefc] border-b border-r border-b-[#dcdcde] border-r-[#2f7fd0]">' : '<th class="p-0 font-normal bg-white border-b border-r border-b-[#dcdcde] border-r-[#b9b9b9]">') + (r < 28 ? r : '') + '</th>' +
        cols.map((c, i) => i === 8 ? '<td class="p-0 border-b border-r border-[#bdbdbd] border-r-black [border-right-style:dashed]"></td>' : '<td class="p-0 border-b border-r border-[#bdbdbd]"></td>').join('') + '</tr>';
    }
    document.getElementById('grid').innerHTML = html + '</tbody>';

    // Ruler ticks every 10px, labels every 100
    let marks = '';
    for (let v = 0; v <= 840; v += 10) {
      const x = v + 4.5;
      const top = v % 100 === 0 ? 0 : v % 50 === 0 ? 5 : 11;
      marks += '<path d="M' + x + ' ' + top + 'V16" stroke="#8a8a8a" />';
      if (v >= 700 && v % 100 === 0) marks += '<text x="' + (x + 2) + '" y="10" font-size="10" fill="#444" font-family="Noto Sans">' + v + '</text>';
    }
    document.getElementById('ruler').innerHTML = marks;
  </script>
</body>
</html>
